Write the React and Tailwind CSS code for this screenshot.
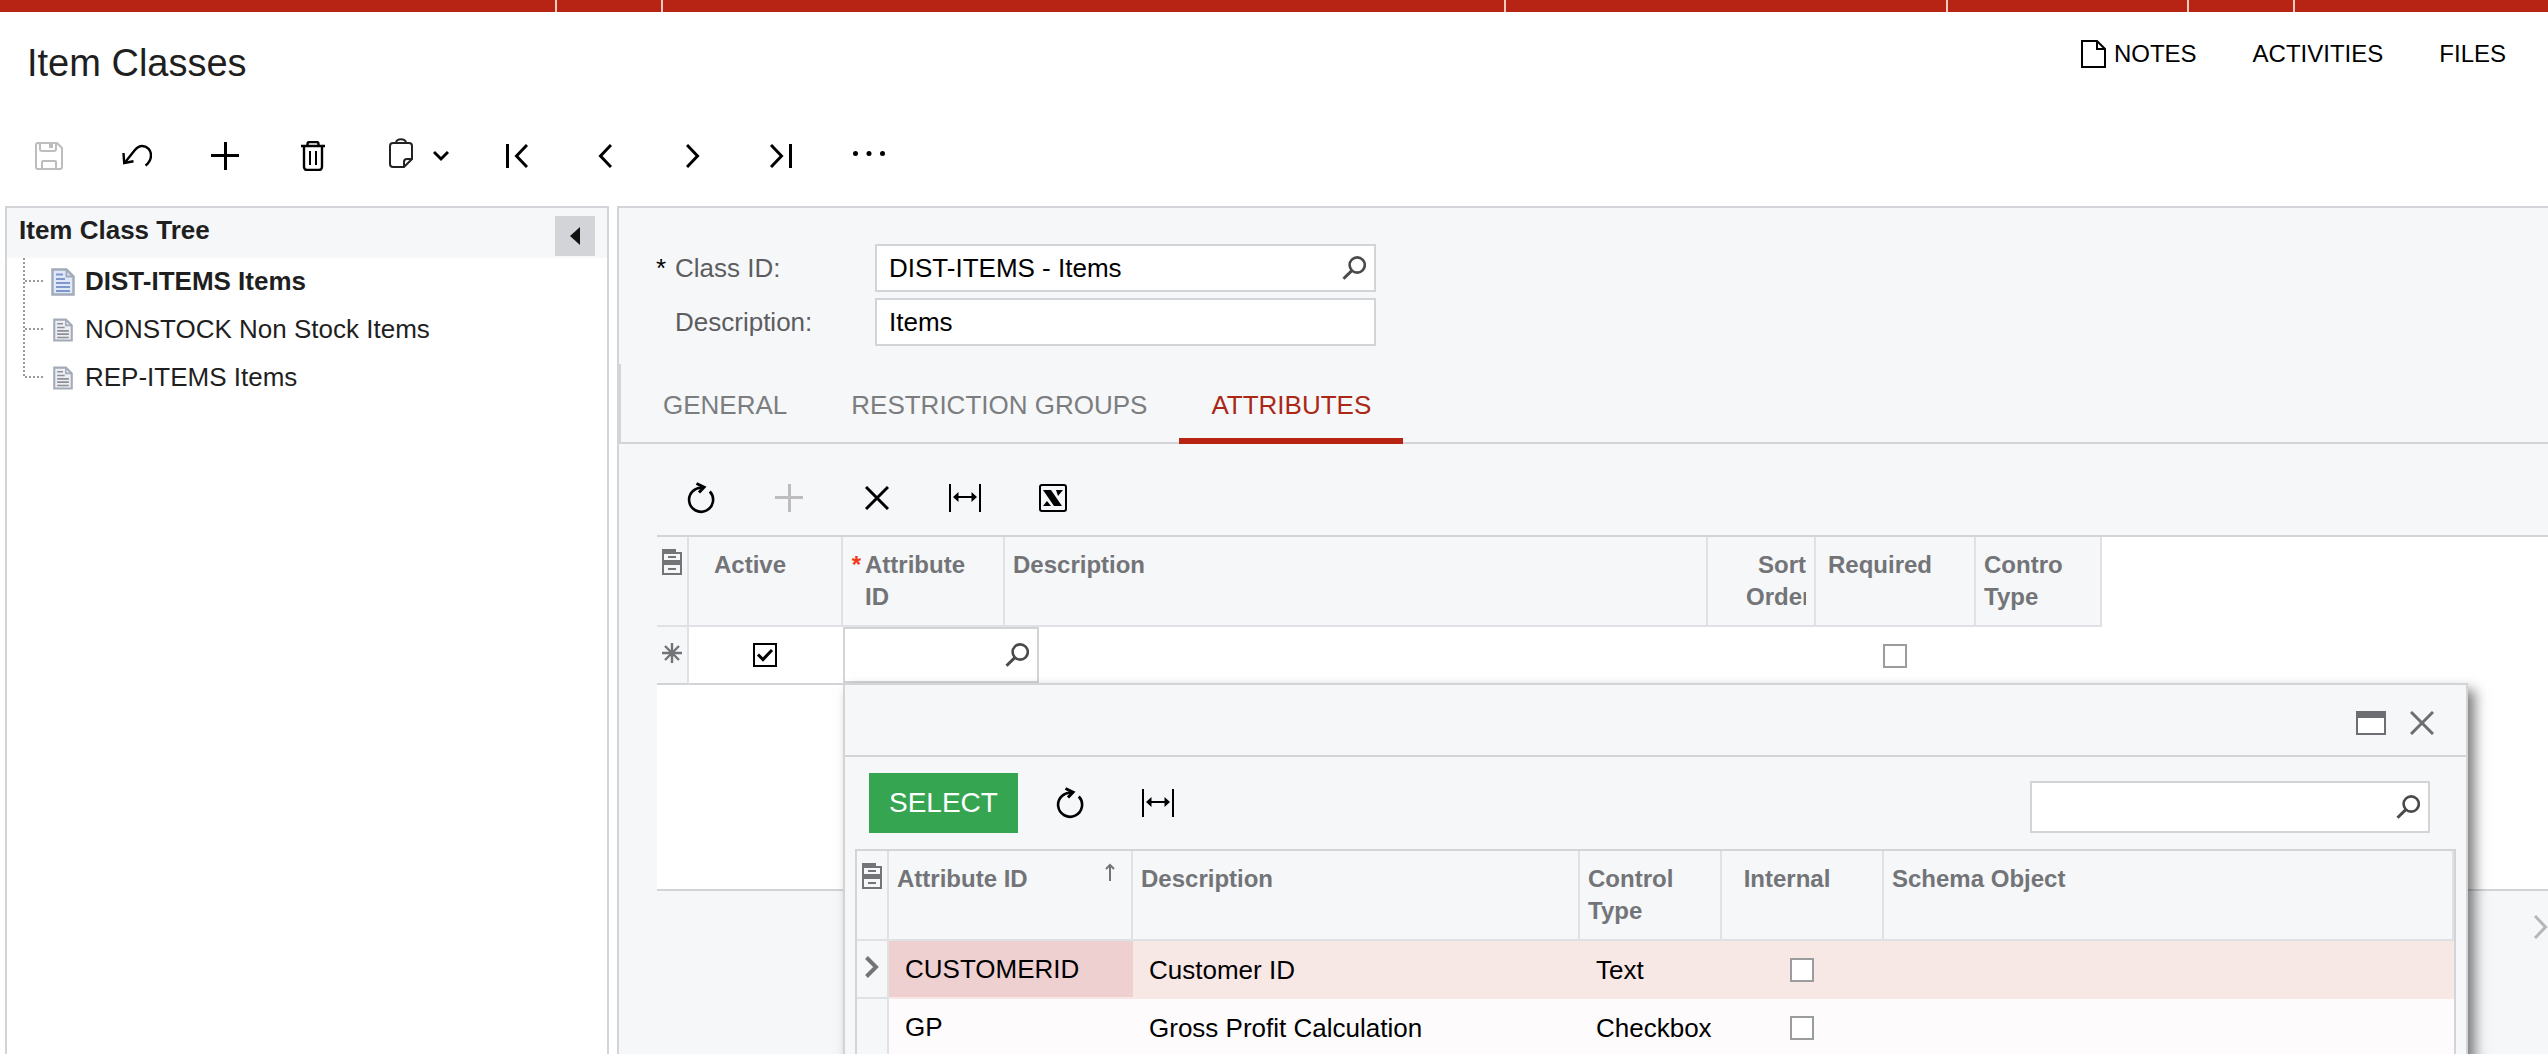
// src/pages/inventory/ItemClasses.jsx
import { useState } from "react";

const TREE = [
    { id: "DIST-ITEMS", label: "DIST-ITEMS Items" },
    { id: "NONSTOCK", label: "NONSTOCK Non Stock Items" },
    { id: "REP-ITEMS", label: "REP-ITEMS Items" },
];

const TABS = ["GENERAL", "RESTRICTION GROUPS", "ATTRIBUTES"];

const ATTRIBUTES = [
    { id: "CUSTOMERID", description: "Customer ID", type: "Text" },
    { id: "GP", description: "Gross Profit Calculation", type: "Checkbox" },
];

/* ICONS */
function Icon({ w, h, sw = 2, className = "", children }) {
    return (
        <svg
            width={w}
            height={h}
            viewBox={`0 0 ${w} ${h}`}
            fill="none"
            stroke="currentColor"
            strokeWidth={sw}
            className={`shrink-0 ${className}`}
            aria-hidden="true"
        >
            {children}
        </svg>
    );
}

const SaveIcon = () => (
    <Icon w={28} h={28} className="text-[#bdbdbd]">
        <path d="M3 1h19l5 5v19a2 2 0 0 1-2 2H3a2 2 0 0 1-2-2V3a2 2 0 0 1 2-2z" />
        <path d="M5 1v6a2 2 0 0 0 2 2h12a2 2 0 0 0 2-2V1M7 27v-7a1 1 0 0 1 1-1h12a1 1 0 0 1 1 1v7" />
        <path d="M16 1v5" strokeWidth="4" />
    </Icon>
);

const UndoIcon = () => (
    <Icon w={30} h={24} sw={2.4}>
        <path d="M2.5 19 12.500 6.500C15 3.500 17 2 20 2c5 0 9 4 9 9 0 4-2 8-5.500 10.500" />
        <path d="M1.500 9l.7 10 9.300-1.800" />
    </Icon>
);

const PlusIcon = ({ className }) => (
    <Icon w={28} h={28} sw={3} className={className}>
        <path d="M14.500 0v28M0 13.500h28" />
    </Icon>
);

const TrashIcon = () => (
    <Icon w={24} h={30} sw={2.4}>
        <path d="M0 5h24M6.500 5V3a2 2 0 0 1 2-2h7a2 2 0 0 1 2 2v2M3 5v21a3 3 0 0 0 3 3h12a3 3 0 0 0 3-3V5" />
        <path d="M9 10v14M15 10v14" strokeWidth="2" />
    </Icon>
);

const ClipboardIcon = () => (
    <Icon w={24} h={36} className="text-[#222]">
        <path d="M15 29H4a3 3 0 0 1-3-3V8a3 3 0 0 1 3-3h16a3 3 0 0 1 3 3v13l-8 8z" />
        <path d="M15 29v-5a3 3 0 0 1 3-3h5M7 5c0-5 10-5 10 0" />
    </Icon>
);

const CaretIcon = () => (
    <Icon w={16} h={12} sw={3}>
        <path d="M1 2l7 7 7-7" />
    </Icon>
);

const FirstIcon = () => (
    <Icon w={22} h={24} sw={3}>
        <path d="M1.500 0v24M21 1 10.500 12 21 23" />
    </Icon>
);

const PrevIcon = () => (
    <Icon w={14} h={24} sw={3}>
        <path d="M13 1 2.500 12 13 23" />
    </Icon>
);

const NextIcon = ({ className, sw = 3 }) => (
    <Icon w={14} h={24} sw={sw} className={className}>
        <path d="M1 1l10.500 11L1 23" />
    </Icon>
);

const LastIcon = () => (
    <Icon w={22} h={24} sw={3}>
        <path d="M20.500 0v24M1 1l10.500 11L1 23" />
    </Icon>
);

const RowArrowIcon = () => (
    <Icon w={14} h={22} sw={4} className="text-[#737477]">
        <path d="M1.500 1.500 11 11l-9.500 9.500" />
    </Icon>
);

const DotsIcon = () => (
    <Icon w={32} h={24}>
        <g fill="currentColor" stroke="none">
            <circle cx="2.500" cy="9.500" r="2.500" />
            <circle cx="16" cy="9.500" r="2.500" />
            <circle cx="29.500" cy="9.500" r="2.500" />
        </g>
    </Icon>
);

const NoteIcon = () => (
    <Icon w={25} h={28}>
        <path d="M1 1h15l8 8v18H1zM16 1v8h8" />
    </Icon>
);

const RefreshIcon = () => (
    <Icon w={28} h={32} sw={2.6}>
        <path d="M22.800 9.500A12 12 0 1 1 16.500 6" />
        <path d="M9.500 1.500l7.500 3.700-5 5.300" strokeWidth="3" />
    </Icon>
);

const CrossIcon = ({ className, sw = 3 }) => (
    <Icon w={24} h={24} sw={sw} className={className}>
        <path d="M1 1l22 22M23 1 1 23" />
    </Icon>
);

const FitIcon = () => (
    <Icon w={32} h={28}>
        <path d="M1 0v28M31 0v28M7 13h18" />
        <path d="M4 13l5.500-5v10zM28 13l-5.500-5v10z" fill="currentColor" stroke="none" />
    </Icon>
);

const ExcelIcon = () => (
    <Icon w={28} h={28}>
        <rect x="1" y="1" width="26" height="26" rx="2" />
        <path d="M4 6h8l11 16h-8zM17 6h7l-5 6zM4 22h8l-4-5z" fill="currentColor" stroke="none" />
    </Icon>
);

const SearchIcon = () => (
    <Icon w={24} h={24} sw={2.600} className="text-[#4a4a4a]">
        <circle cx="15.200" cy="9" r="7.600" />
        <path d="M9.800 14.600 1.500 22.800" strokeWidth="3" />
    </Icon>
);

const DrawersIcon = () => (
    <Icon w={20} h={26} className="text-[#737477]">
        <path d="M0 2h14" strokeWidth="4" />
        <path d="M1 4h18v21H1z" />
        <path d="M0 13.500h20" strokeWidth="5" />
        <path d="M6 8h8M6 20h8" />
    </Icon>
);

const NewRowIcon = () => (
    <Icon w={20} h={20} sw={2.4} className="text-[#737477]">
        <path d="M10 0v20M0 10h20M3 3l14 14M17 3 3 17" />
    </Icon>
);

const WindowIcon = () => (
    <Icon w={30} h={24} className="text-[#6d6e71]">
        <rect x="1" y="1" width="28" height="22" fill="#fff" />
        <path d="M0 3.500h30" strokeWidth="7" />
    </Icon>
);

const ArrowUpIcon = () => (
    <Icon w={10} h={18} className="text-[#737477]">
        <path d="M5 2v16M1 6l4-4 4 4" />
    </Icon>
);

function PageIcon({ active }) {
    return (
        <svg
            width={active ? 24 : 20}
            height={active ? 28 : 24}
            viewBox="0 0 24 28"
            fill="none"
            aria-hidden="true"
        >
            <path d="M1.500 1.500h14l7 7v18h-21z" fill={active ? "#dfe8f8" : "#eceef1"} stroke="#a3abb9" strokeWidth="2.500" />
            <path d="M15.500 1.500v7h7" stroke="#a3abb9" strokeWidth="2" />
            <path
                d="M5 6.500h7M5 11h9M5 15h14M5 19h14M5 23h14"
                stroke={active ? "#7f97cc" : "#8d8f99"}
                strokeWidth="2"
            />
        </svg>
    );
}

function Branch({ last }) {
    return (
        <svg width="22" height="48" fill="none" stroke="#9a9a9a" strokeWidth="2" strokeDasharray="2 2" aria-hidden="true">
            <path d={last ? "M1 0v24" : "M1 0v48"} />
            <path d="M2 23h20" />
        </svg>
    );
}

/* SHARED */
function ToolButton({ label, disabled, children, className = "w-[88px]" }) {
    return (
        <button
            type="button"
            aria-label={label}
            disabled={disabled}
            className={`flex h-full items-center justify-center ${className}`}
        >
            {children}
        </button>
    );
}

function Lookup({ label, id, value, className }) {
    return (
        <div className={`flex items-center border-2 border-[#d2d4d7] bg-white pr-2 ${className}`}>
            <input
                id={id}
                aria-label={label}
                defaultValue={value}
                className="h-full min-w-0 flex-1 pl-3 outline-none"
            />
            <button type="button" aria-label={`Search ${label}`}>
                <SearchIcon />
            </button>
        </div>
    );
}

function Check({ label, checked = false }) {
    const [on, setOn] = useState(checked);

    return (
        <span className="relative mx-auto block size-6">
            <input
                type="checkbox"
                aria-label={label}
                checked={on}
                onChange={(e) => setOn(e.target.checked)}
                className="block size-6 appearance-none border-2 border-[#9b9c9e] bg-white checked:border-black"
            />
            {on && (
                <Icon w={24} h={24} sw={3} className="pointer-events-none absolute inset-0">
                    <path d="M5 11.500l5 5L19 7" />
                </Icon>
            )}
        </span>
    );
}

function Th({ children, className = "pl-2 pr-9 text-left" }) {
    return (
        <th className={`h-[90px] border-r-2 border-b-2 border-[#dfe1e5] bg-[#f5f7f9] pt-3 align-top text-2xl leading-8 font-bold text-[#737477] ${className}`}>
            {children}
        </th>
    );
}

function AttributeLookup() {
    return (
        <div
            role="dialog"
            aria-label="Select attribute"
            className="absolute top-[146px] right-20 left-[186px] z-10 min-h-[520px] border-2 border-[#d2d4d7] bg-[#f5f7f9] shadow-[7px_7px_12px_rgba(0,0,0,0.5)]"
        >
            <div className="flex h-[72px] items-center justify-end gap-6 border-b-2 border-[#d2d4d7] pt-1.5 pr-8">
                <button type="button" aria-label="Maximize">
                    <WindowIcon />
                </button>
                <button type="button" aria-label="Close">
                    <CrossIcon className="text-[#6d6e71]" />
                </button>
            </div>

            <div className="flex items-end py-4 pr-9 pl-6">
                <button type="button" className="mr-2 h-[60px] bg-[#35a552] px-5 text-[28px] text-white">
                    SELECT
                </button>
                <div className="flex h-[60px]">
                    <ToolButton label="Refresh"><RefreshIcon /></ToolButton>
                    <ToolButton label="Fit to screen"><FitIcon /></ToolButton>
                </div>
                <Lookup label="attributes" className="ml-auto h-[52px] w-[400px]" />
            </div>

            <div className="mx-2.5 border-2 border-[#d2d4d7]">
                <table className="w-full table-fixed border-separate border-spacing-0">
                    <colgroup>
                        <col className="w-8" />
                        <col className="w-[244px]" />
                        <col className="w-[447px]" />
                        <col className="w-[142px]" />
                        <col className="w-[162px]" />
                        <col />
                    </colgroup>
                    <thead>
                        <tr>
                            <Th className="pl-[5px]"><DrawersIcon /></Th>
                            <Th className="pr-4 pl-2 text-left">
                                <div className="flex justify-between">
                                    Attribute ID
                                    <ArrowUpIcon />
                                </div>
                            </Th>
                            <Th>Description</Th>
                            <Th>Control Type</Th>
                            <Th className="pr-[38px] pl-2 text-center">Internal</Th>
                            <Th>Schema Object</Th>
                        </tr>
                    </thead>
                    <tbody>
                        {ATTRIBUTES.map((item, i) => (
                            <tr key={item.id} className={i === 0 ? "h-[58px] bg-[#f7e8e6]" : "h-[58px] bg-[#fdfbfc]"}>
                                <td className="border-r-2 border-b-2 border-[#dfe1e5] bg-[#f5f7f9] pb-1 pl-2">
                                    {i === 0 && <RowArrowIcon />}
                                </td>
                                <td className={`border-b-2 border-[#f7e8e6] pl-4 ${i === 0 ? "bg-[#efd0d0]" : ""}`}>
                                    {item.id}
                                </td>
                                <td className="pl-4">{item.description}</td>
                                <td className="pl-4">{item.type}</td>
                                <td className="pr-0.5"><Check label={`${item.id} internal`} /></td>
                                <td />
                            </tr>
                        ))}
                    </tbody>
                </table>
            </div>
        </div>
    );
}

export default function ItemClasses() {
    const [tab, setTab] = useState("ATTRIBUTES");
    const [node, setNode] = useState("DIST-ITEMS");

    return (
        <div className="flex h-screen flex-col overflow-hidden bg-white font-['Liberation_Sans',Arial,sans-serif] text-[26px] leading-8 text-black">

            {/* TOP BAR */}
            <div className="flex h-3 shrink-0 divide-x-2 divide-[#f3c9c2] bg-[#b72413]">
                <div className="w-[557px]" />
                <div className="w-[106px]" />
                <div className="flex-1" />
                <div className="w-[442px]" />
                <div className="w-[241px]" />
                <div className="w-[106px]" />
                <div className="w-[253px]" />
            </div>

            {/* HEADER */}
            <header className="flex items-start justify-between pt-[26px] pr-[42px] pl-[27px]">
                <h1 className="text-[38px] leading-[50px] text-[#1f1f1f]">Item Classes</h1>
                <nav className="flex gap-14 text-2xl leading-8">
                    <a href="#notes" className="flex items-center gap-2">
                        <NoteIcon />
                        NOTES
                    </a>
                    <a href="#activities">ACTIVITIES</a>
                    <a href="#files">FILES</a>
                </nav>
            </header>

            {/* TOOLBAR */}
            <div className="mt-6 mb-1.5 flex h-[88px] shrink-0 pl-[5px]">
                <ToolButton label="Save" disabled><SaveIcon /></ToolButton>
                <ToolButton label="Undo"><UndoIcon /></ToolButton>
                <ToolButton label="Add"><PlusIcon /></ToolButton>
                <ToolButton label="Delete"><TrashIcon /></ToolButton>
                <ToolButton label="Clipboard" className="w-[116px] gap-5 pl-2">
                    <ClipboardIcon />
                    <CaretIcon />
                </ToolButton>
                <ToolButton label="First"><FirstIcon /></ToolButton>
                <ToolButton label="Previous"><PrevIcon /></ToolButton>
                <ToolButton label="Next"><NextIcon /></ToolButton>
                <ToolButton label="Last"><LastIcon /></ToolButton>
                <ToolButton label="More"><DotsIcon /></ToolButton>
            </div>

            <div className="flex min-h-0 flex-1 gap-2 pl-[5px]">

                {/* TREE */}
                <aside className="w-[604px] shrink-0 border-x-2 border-t-2 border-[#d2d4d7]">
                    <div className="flex h-[50px] items-start justify-between bg-[#f5f7f9] pr-3 pl-3">
                        <h2 className="pt-1.5 font-bold text-[#1f1f1f]">Item Class Tree</h2>
                        <button
                            type="button"
                            aria-label="Collapse"
                            className="mt-2 flex size-10 items-center justify-center bg-[#d2d4d7]"
                        >
                            <svg width="10" height="18" aria-hidden="true">
                                <path d="M10 0v18L0 9z" fill="#111" />
                            </svg>
                        </button>
                    </div>
                    <ul className="pl-4">
                        {TREE.map((item, i) => (
                            <li key={item.id}>
                                <button
                                    type="button"
                                    onClick={() => setNode(item.id)}
                                    className="flex h-12 items-center text-[#1f1f1f]"
                                >
                                    <Branch last={i === TREE.length - 1} />
                                    <span className="mr-2.5 ml-1.5 flex w-6 justify-center">
                                        <PageIcon active={node === item.id} />
                                    </span>
                                    <span className={node === item.id ? "pb-0.5 font-bold" : "pb-0.5"}>{item.label}</span>
                                </button>
                            </li>
                        ))}
                    </ul>
                </aside>

                <main className="flex min-w-0 flex-1 flex-col border-t-2 border-l-2 border-[#d2d4d7] bg-[#f5f7f9]">

                    {/* FORM */}
                    <div className="space-y-1.5 pt-9 pl-[37px]">
                        <div className="flex h-12 items-center">
                            <span className="w-[19px]">*</span>
                            <label htmlFor="class-id" className="w-[200px] text-[#5c5d5f]">Class ID:</label>
                            <Lookup id="class-id" label="Class ID" value="DIST-ITEMS - Items" className="h-12 w-[501px]" />
                        </div>
                        <div className="flex h-12 items-center">
                            <span className="w-[19px]" />
                            <label htmlFor="description" className="w-[200px] text-[#5c5d5f]">Description:</label>
                            <input
                                id="description"
                                defaultValue="Items"
                                className="h-12 w-[501px] border-2 border-[#d2d4d7] bg-white px-3 outline-none"
                            />
                        </div>
                    </div>

                    {/* TABS */}
                    <div className="mt-[18px] flex h-20 shrink-0 border-b-2 border-l-2 border-[#d2d4d7] pl-2.5">
                        {TABS.map((name) => (
                            <button
                                key={name}
                                type="button"
                                onClick={() => setTab(name)}
                                className={`-mb-0.5 border-b-[6px] px-8 pt-2
                                ${tab === name ? "border-[#b72413] text-[#ab2718]" : "border-transparent text-[#7c7d7f]"}`}
                            >
                                {name}
                            </button>
                        ))}
                    </div>

                    <div className="flex h-[91px] shrink-0 pt-4 pl-[38px]">
                        <ToolButton label="Refresh"><RefreshIcon /></ToolButton>
                        <ToolButton label="Add row" disabled><PlusIcon className="text-[#bdbdbd]" /></ToolButton>
                        <ToolButton label="Delete row"><CrossIcon /></ToolButton>
                        <ToolButton label="Fit to screen"><FitIcon /></ToolButton>
                        <ToolButton label="Export to Excel"><ExcelIcon /></ToolButton>
                    </div>

                    {/* GRID */}
                    <div className="relative ml-[38px] flex-1 border-y-2 border-[#d2d4d7] bg-white">
                        <table className="w-[1445px] table-fixed border-separate border-spacing-0">
                            <colgroup>
                                <col className="w-8" />
                                <col className="w-[154px]" />
                                <col className="w-[162px]" />
                                <col />
                                <col className="w-[108px]" />
                                <col className="w-[160px]" />
                                <col className="w-[126px]" />
                            </colgroup>
                            <thead>
                                <tr>
                                    <Th className="pl-[5px]"><DrawersIcon /></Th>
                                    <Th className="pr-[38px] pl-2 text-center">Active</Th>
                                    <Th className="pr-2 text-left">
                                        <div className="flex">
                                            <span className="w-[22px] pr-1 text-right text-[#f03a17]">*</span>
                                            <span className="w-[110px]">Attribute ID</span>
                                        </div>
                                    </Th>
                                    <Th>Description</Th>
                                    <Th className="pr-2 pl-[38px] text-right">
                                        <div className="overflow-hidden">Sort Order</div>
                                    </Th>
                                    <Th className="pr-[38px] pl-2 text-center">Required</Th>
                                    <Th>
                                        <div className="overflow-hidden">Control Type</div>
                                    </Th>
                                </tr>
                            </thead>
                            <tbody>
                                <tr className="h-[58px]">
                                    <td className="border-r-2 border-b-2 border-r-[#dfe1e5] border-b-[#d2d4d7] bg-[#f5f7f9] pb-1 pl-[5px]">
                                        <NewRowIcon />
                                    </td>
                                    <td className="border-b-2 border-[#d2d4d7] pr-0.5"><Check label="Active" checked /></td>
                                    <td className="p-0 align-top">
                                        <Lookup label="Attribute ID" className="h-14 w-[196px]" />
                                    </td>
                                    <td />
                                    <td />
                                    <td className="pr-0.5"><Check label="Required" /></td>
                                    <td />
                                </tr>
                            </tbody>
                        </table>
                        <AttributeLookup />
                    </div>

                    {/* PAGER */}
                    <div className="flex h-[163px] shrink-0 items-start justify-end pt-6">
                        <button type="button" aria-label="Next page">
                            <NextIcon className="text-[#b5b6b8]" />
                        </button>
                    </div>
                </main>
            </div>
        </div>
    );
}
